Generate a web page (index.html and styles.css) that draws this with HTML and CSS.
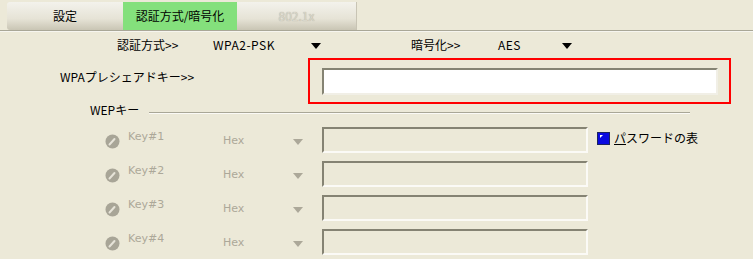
FILE: index.html
```html
<!DOCTYPE html>
<html lang="ja">
<head>
  <meta charset="UTF-8" />
  <title>認証方式/暗号化</title>
  <link rel="stylesheet" href="styles.css">
</head>
<body>
  <div class="tabs">
    <div class="tab first">設定</div>
    <div class="tab active">認証方式/暗号化</div>
    <div class="tab off">802.1x</div>
  </div>

  <div class="mode-row">
    <span>認証方式&gt;&gt;</span>
    <span class="val">WPA2-PSK</span>
    <span class="arrow"></span>
    <span>暗号化&gt;&gt;</span>
    <span class="val">AES</span>
    <span class="arrow"></span>
  </div>

  <div class="psk-row">
    <span class="psk-label">WPAプレシェアドキー&gt;&gt;</span>
    <div class="focus-box">
      <div class="field white"></div>
    </div>
  </div>

  <div class="wep-head">
    <span>WEPキー</span>
    <span class="rule"></span>
  </div>

  <div class="keys">
    <span class="radio"><svg width="15" height="15" viewBox="0 0 15 15"><circle cx="7.5" cy="7.5" r="7" fill="#a8a597"/><path d="M4.5 10.5 L9.5 5" stroke="#e6e3d8" stroke-width="2" stroke-linecap="round"/></svg></span>
    <span class="key">Key#1</span>
    <span class="hex">Hex</span>
    <span class="arrow dim"></span>
    <span class="field"></span>
    <label class="show-pw"><span class="check"><svg width="13" height="13" viewBox="0 0 13 13"><rect x="0.5" y="0.5" width="12" height="12" fill="#0a0ae0" stroke="#1c2460"/><path d="M3 6 L3 3 L6 3 Z" fill="#fff"/></svg></span><span><u>パ</u>スワードの表</span></label>

    <span class="radio"><svg width="15" height="15" viewBox="0 0 15 15"><circle cx="7.5" cy="7.5" r="7" fill="#a8a597"/><path d="M4.5 10.5 L9.5 5" stroke="#e6e3d8" stroke-width="2" stroke-linecap="round"/></svg></span>
    <span class="key">Key#2</span>
    <span class="hex">Hex</span>
    <span class="arrow dim"></span>
    <span class="field"></span>
    <span></span>

    <span class="radio"><svg width="15" height="15" viewBox="0 0 15 15"><circle cx="7.5" cy="7.5" r="7" fill="#a8a597"/><path d="M4.5 10.5 L9.5 5" stroke="#e6e3d8" stroke-width="2" stroke-linecap="round"/></svg></span>
    <span class="key">Key#3</span>
    <span class="hex">Hex</span>
    <span class="arrow dim"></span>
    <span class="field"></span>
    <span></span>

    <span class="radio"><svg width="15" height="15" viewBox="0 0 15 15"><circle cx="7.5" cy="7.5" r="7" fill="#a8a597"/><path d="M4.5 10.5 L9.5 5" stroke="#e6e3d8" stroke-width="2" stroke-linecap="round"/></svg></span>
    <span class="key">Key#4</span>
    <span class="hex">Hex</span>
    <span class="arrow dim"></span>
    <span class="field"></span>
    <span></span>
  </div>
</body>
</html>
```

FILE: styles.css
```css
body {
  margin: 0;
  background: #ece9d8;
  color: #000;
  font-family: "Noto Sans CJK JP", "Noto Sans", sans-serif;
  font-size: 12px;
  line-height: 14px;
}
.tabs {
  display: flex;
  padding: 2px 0 0 7px;
  height: 28px;
  border-bottom: 1px solid #a9a797;
  box-shadow: 0 1px 0 #f6f5ef;
}
.tab {
  display: flex;
  align-items: center;
  justify-content: center;
  height: 28px;
  background: linear-gradient(#f3f2ec, #e6e3d6 60%, #c9c5b4);
}
.tab.first {
  width: 116px;
  border-radius: 3px 0 0 3px;
}
.tab.active {
  width: 114px;
  background: #84e07c;
}
.tab.off {
  width: 119px;
  color: #d9d6ca;
  text-shadow: 0 0 1px #a19e90;
  border-right: 1px solid #c8c4b4;
}
.mode-row {
  display: grid;
  grid-template-columns: 96px 98px 100px 87px 64px 20px;
  align-items: center;
  height: 27px;
  padding-left: 117px;
}
.val {
  letter-spacing: 0.5px;
}
.arrow {
  width: 0;
  height: 0;
  border-left: 5px solid transparent;
  border-right: 5px solid transparent;
  border-top: 6px solid #000;
  margin-top: 2px;
}
.arrow.dim {
  border-top-color: #aca899;
  margin-top: 4px;
}
.psk-row {
  display: flex;
  height: 46px;
}
.psk-label {
  width: 248px;
  padding: 12px 0 0 60px;
}
.focus-box {
  width: 396px;
  height: 27px;
  border: 2px solid #f00;
  padding: 8px 11px 7px 12px;
}
.field {
  display: block;
  box-sizing: border-box;
  height: 27px;
  border-top: 2px solid #858373;
  border-left: 2px solid #858373;
  border-bottom: 2px solid #fbfaf6;
  border-right: 2px solid #fbfaf6;
}
.field.white {
  background: #fff;
  border-bottom-color: #f1efe6;
  border-right-color: #f1efe6;
}
.wep-head {
  display: flex;
  height: 16px;
  padding-left: 90px;
  line-height: 12px;
}
.rule {
  width: 541px;
  height: 0;
  margin: 8px 0 0 10px;
  border-top: 1px solid #a9a797;
  border-bottom: 1px solid #fbfaf6;
}
.keys {
  display: grid;
  grid-template-columns: 23px 95px 70px 29px 266px auto;
  grid-auto-rows: 26px;
  row-gap: 8px;
  align-items: center;
  margin-top: 7px;
  padding-left: 105px;
  font-family: "DejaVu Sans", sans-serif;
  font-size: 11px;
  color: #aca899;
}
.radio {
  display: flex;
  margin-top: 2px;
}
.key {
  margin-top: -6px;
}
.hex {
  margin-top: 2px;
}
.keys .field {
  height: 26px;
}
.show-pw {
  display: flex;
  align-items: center;
  align-self: start;
  gap: 4px;
  margin: 4px 0 0 9px;
  color: #000;
  font-family: "Noto Sans CJK JP", sans-serif;
  font-size: 12px;
}
.check {
  display: flex;
}
```
